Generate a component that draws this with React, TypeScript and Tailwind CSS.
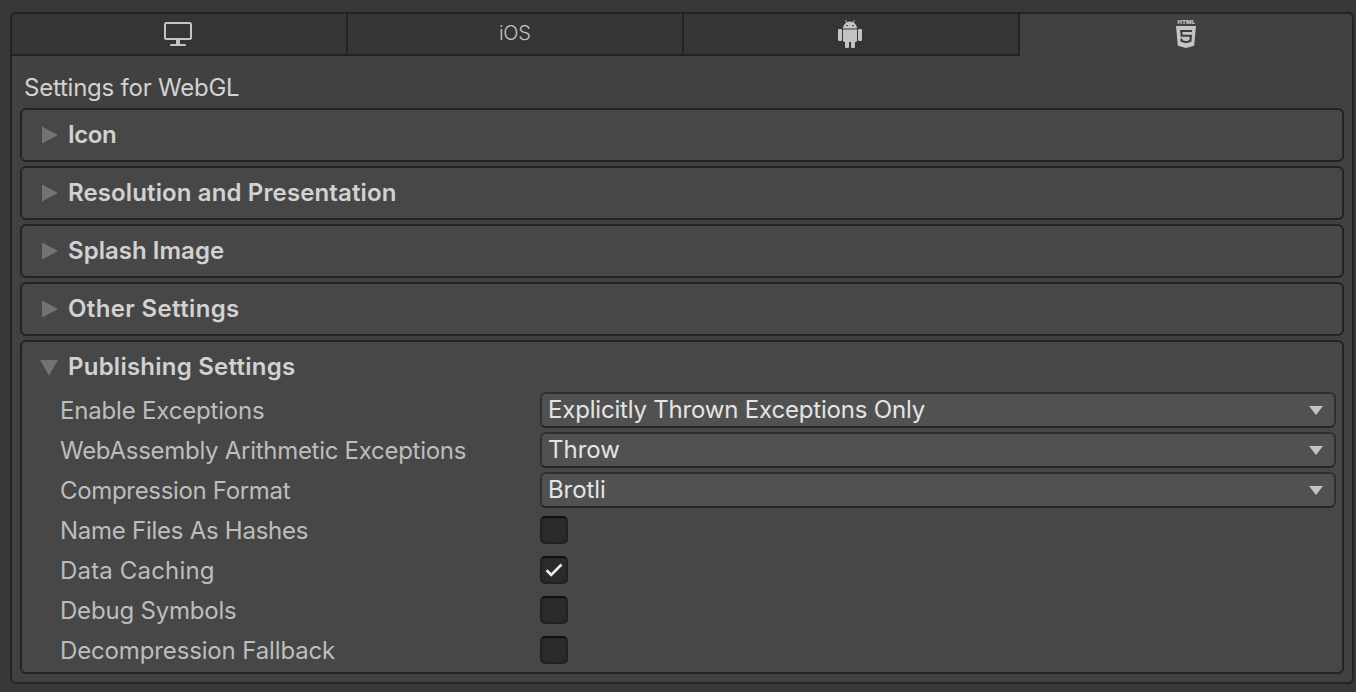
import type { ReactNode } from "react";

function MonitorIcon() {
  return (
    <svg width="28" height="24" viewBox="0 0 28 24" fill="none">
      <rect x="1" y="1" width="26" height="16" rx="1.5" stroke="#c4c4c4" strokeWidth="2" />
      <path d="M12 18h4v4h5q1 0 1 2H6q0-2 1-2h5z" fill="#c4c4c4" />
    </svg>
  );
}

function AndroidIcon() {
  return (
    <svg width="24" height="28" viewBox="0 0 24 28" fill="#c4c4c4">
      <path d="M5 8.6C5 5.6 6.6 3.5 8.4 2.4L6.9.4 7.5 0l1.6 2a8 8 0 0 1 5.8 0l1.6-2 .6.4-1.5 2C17.400 3.500 19 5.600 19 8.600z" />
      <ellipse cx="9" cy="5.600" rx="1.100" ry=".7" fill="#353535" />
      <ellipse cx="15" cy="5.600" rx="1.100" ry=".7" fill="#353535" />
      <path d="M5 9.400h14V20.600q0 1.400-1.400 1.400H6.400Q5 22 5 20.600z" />
      <rect x="0" y="9" width="4" height="12" rx="1.200" />
      <rect x="20" y="9" width="4" height="12" rx="1.200" />
      <rect x="7" y="19" width="4" height="9" rx="1.200" />
      <rect x="13" y="19" width="4" height="9" rx="1.200" />
    </svg>
  );
}

function HtmlIcon() {
  return (
    <svg width="20" height="28" viewBox="0 0 20 28" fill="#c4c4c4" className="mb-0.5">
      <text
        x="1.500"
        y="4"
        fontSize="5.400"
        fontWeight="900"
        fontFamily="Inter, sans-serif"
        textLength="17.500"
        lengthAdjust="spacingAndGlyphs"
      >
        HTML
      </text>
      <path d="M0 6h20l-1.800 19.800L10 28l-8.200-2.200z" />
      <path d="M16 11H5.200l.5 4.700h9.200l-.5 5.200-4.400 1.300-4.400-1.300-.2-2.200" fill="none" stroke="#3c3c3c" strokeWidth="2.100" />
    </svg>
  );
}

function Tab({ active = false, children }: { active?: boolean; children: ReactNode }) {
  return (
    <div
      className={
        active
          ? "flex h-[42px] w-[332px] items-center justify-center"
          : "flex h-[42px] w-[336px] items-center justify-center border-r-2 border-b-2 border-[#232323] bg-[#353535] pr-0.5"
      }
    >
      {children}
    </div>
  );
}

function SectionTitle({ open = false, title, tracking }: { open?: boolean; title: string; tracking: string }) {
  return (
    <div className="flex h-[50px] items-center pl-[18px]">
      <svg width="18" height="18" viewBox="0 0 18 18" fill="#737373" className="mr-2.5">
        {open ? <path d="M0 2h18L9 17.500z" /> : <path d="M2 0.500v17L18 9z" />}
      </svg>
      <span className={`font-semibold text-[#d2d2d2] ${tracking}`}>{title}</span>
    </div>
  );
}

function Section({ title, tracking }: { title: string; tracking: string }) {
  return (
    <section className="rounded-md border-2 border-[#232323] bg-[#474747]">
      <SectionTitle title={title} tracking={tracking} />
    </section>
  );
}

function Row({ label, tracking, children }: { label: string; tracking: string; children: ReactNode }) {
  return (
    <div className="flex h-10 items-center">
      <span className={`w-[480px] pt-0.5 text-[#bdbdbd] ${tracking}`}>{label}</span>
      {children}
    </div>
  );
}

function Select({ value, tracking }: { value: string; tracking: string }) {
  return (
    <div className="flex h-9 w-[796px] items-center justify-between rounded-md border-2 border-[#303030] border-b-[#242424] bg-[#515151] pr-[10px] pl-[6px]">
      <span className={`text-[#e4e4e4] ${tracking}`}>{value}</span>
      <svg width="16" height="10" viewBox="0 0 16 10" fill="#c4c4c4">
        <path d="M1 1h14L8 10z" />
      </svg>
    </div>
  );
}

function Checkbox({ checked = false }: { checked?: boolean }) {
  return (
    <div className="flex size-7 items-center justify-center rounded-[5px] border-2 border-[#212121] border-t-[#0d0d0d] bg-[#2a2a2a]">
      {checked && (
        <svg width="18" height="14" viewBox="0 0 18 14" fill="none" stroke="#f0f0f0" strokeWidth="2.600">
          <path d="M1.500 7.200 6.200 11.800 16.500 1.500" />
        </svg>
      )}
    </div>
  );
}

export default function App() {
  return (
    <div className="h-[692px] w-[1356px] overflow-hidden bg-[#383838] pt-3 pl-[10px] font-['Inter',sans-serif] text-[24px] leading-[30px] whitespace-nowrap">
      <main className="h-[672px] w-[1344px] overflow-hidden rounded-md border-2 border-[#232323] bg-[#414141]">
        <nav className="flex">
          <Tab><MonitorIcon /></Tab>
          <Tab><span className="-mt-0.5 pl-[1.5px] text-[20px] font-light tracking-[-0.3px] text-[#c4c4c4]">iOS</span></Tab>
          <Tab><AndroidIcon /></Tab>
          <Tab active><HtmlIcon /></Tab>
        </nav>
        <h1 className="mt-[17px] mb-[5px] h-[30px] pl-3 tracking-[-0.23px] text-[#d2d2d2]">Settings for WebGL</h1>
        <div className="flex flex-col gap-1 pr-2 pl-2">
          <Section title="Icon" tracking="tracking-[-0.4px]" />
          <Section title="Resolution and Presentation" tracking="tracking-[0.13px]" />
          <Section title="Splash Image" tracking="tracking-[0.03px]" />
          <Section title="Other Settings" tracking="tracking-[0.36px]" />
          <section className="h-[334px] rounded-md border-2 border-[#232323] bg-[#474747]">
            <SectionTitle open title="Publishing Settings" tracking="tracking-[0.24px]" />
            <div className="-mt-0.5 pl-[38px]">
              <Row label="Enable Exceptions" tracking="tracking-[-0.18px]">
                <Select value="Explicitly Thrown Exceptions Only" tracking="tracking-[-0.19px]" />
              </Row>
              <Row label="WebAssembly Arithmetic Exceptions" tracking="tracking-[-0.28px]">
                <Select value="Throw" tracking="tracking-normal" />
              </Row>
              <Row label="Compression Format" tracking="tracking-[-0.33px]">
                <Select value="Brotli" tracking="tracking-[-0.1px]" />
              </Row>
              <Row label="Name Files As Hashes" tracking="tracking-[-0.26px]"><Checkbox /></Row>
              <Row label="Data Caching" tracking="tracking-[0.17px]"><Checkbox checked /></Row>
              <Row label="Debug Symbols" tracking="tracking-[-0.2px]"><Checkbox /></Row>
              <Row label="Decompression Fallback" tracking="tracking-[-0.14px]"><Checkbox /></Row>
            </div>
          </section>
        </div>
      </main>
    </div>
  );
}
